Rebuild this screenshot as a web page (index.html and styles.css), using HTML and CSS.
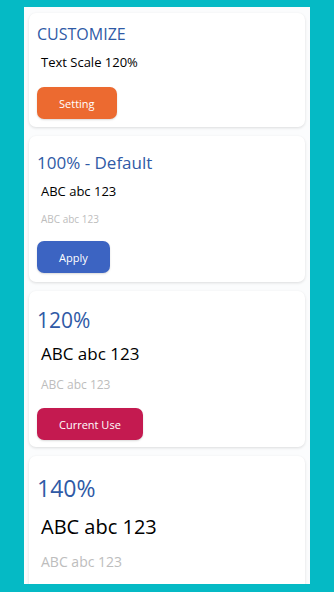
FILE: index.html
```html
<!DOCTYPE html>
<html>
<head>
<meta charset="utf-8">
<link rel="stylesheet" href="styles.css">
</head>
<body>
<div class="panel">
  <div class="card card-1">
    <div class="title t16">CUSTOMIZE</div>
    <div class="sample s13">Text Scale 120%</div>
    <button class="btn btn-orange">Setting</button>
  </div>
  <div class="card card-2">
    <div class="title t17">100% - Default</div>
    <div class="sample s13">ABC abc 123</div>
    <div class="faint f10">ABC abc 123</div>
    <button class="btn btn-blue">Apply</button>
  </div>
  <div class="card card-3">
    <div class="title t21">120%</div>
    <div class="sample s17">ABC abc 123</div>
    <div class="faint f12">ABC abc 123</div>
    <button class="btn btn-red">Current Use</button>
  </div>
  <div class="card card-4">
    <div class="title t24">140%</div>
    <div class="sample s20">ABC abc 123</div>
    <div class="faint f14">ABC abc 123</div>
  </div>
</div>
</body>
</html>
```

FILE: styles.css
```css
html, body {
  margin: 0;
  padding: 0;
}
body {
  background: #05bac5;
  font-family: "Open Sans", "Noto Sans", sans-serif;
  height: 592px;
  overflow: hidden;
}
.panel {
  margin: 7px 24px 0;
  height: 577px;
  background: #fbfcfd;
  padding: 6px 5px 0;
  box-sizing: border-box;
  overflow: hidden;
  display: flex;
  flex-direction: column;
  gap: 9px;
}
.card {
  background: #ffffff;
  border-radius: 7px;
  box-shadow: 0 1px 3px rgba(0, 0, 0, 0.13);
  padding: 0 8px;
  display: flex;
  flex-direction: column;
  align-items: flex-start;
  flex-shrink: 0;
}
.card-1 { padding-top: 10px; padding-bottom: 8px; }
.card-2 { padding-top: 16px; padding-bottom: 9px; }
.card-3 { padding-top: 15px; padding-bottom: 7px; }
.card-4 { padding-top: 17px; padding-bottom: 20px; }

.title {
  color: #2f5aa6;
  font-weight: 400;
}
.t16 { font-size: 16px; line-height: 22px; }
.t17 { font-size: 17px; line-height: 22px; }
.t21 { font-size: 21px; line-height: 28px; }
.t24 { font-size: 23px; line-height: 30px; }

.sample {
  color: #000;
  padding-left: 4px;
}
.s13 { font-size: 13px; line-height: 18px; margin-top: 8px; }
.s17 { font-size: 17px; line-height: 24px; margin-top: 8px; }
.s20 { font-size: 20px; line-height: 26px; margin-top: 11px; }

.faint {
  color: #bdbdbd;
  padding-left: 4px;
}
.f10 { font-size: 10px; line-height: 14px; margin-top: 12px; }
.f12 { font-size: 12px; line-height: 16px; margin-top: 11px; }
.f14 { font-size: 14px; line-height: 20px; margin-top: 12px; }

.btn {
  border: none;
  border-radius: 7px;
  height: 32px;
  padding: 0 22px;
  color: #fff;
  font-family: "Open Sans", "Noto Sans", sans-serif;
  font-size: 11px;
  margin-top: 15px;
  box-shadow: 0 1px 2px rgba(0, 0, 0, 0.15);
}
.card-1 .btn { margin-top: 16px; }
.btn-orange { background: #ec6a30; }
.btn-blue { background: #3c64c2; }
.btn-red { background: #c41a50; }
```
